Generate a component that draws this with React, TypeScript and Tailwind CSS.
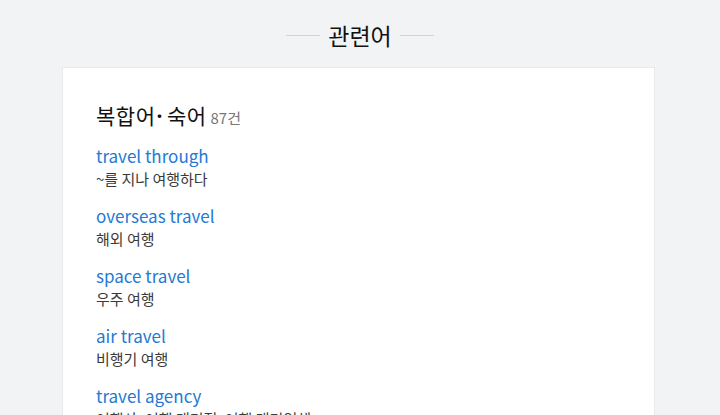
const items = [
  { en: "travel through", ko: "~를 지나 여행하다" },
  { en: "overseas travel", ko: "해외 여행" },
  { en: "space travel", ko: "우주 여행" },
  { en: "air travel", ko: "비행기 여행" },
  { en: "travel agency", ko: "여행사, 여행 대리점, 여행 대리업체" },
];

export default function App() {
  return (
    <div
      className="h-[415px] overflow-hidden bg-[#f2f3f5]"
      style={{ fontFamily: '"Noto Sans CJK KR", "Noto Sans", sans-serif' }}
    >
      <div className="flex items-center justify-center gap-[8px] pt-[20px]">
        <span className="h-px w-[34px] bg-[#cfd2d6]" />
        <h2 className="text-[23px] leading-[30px] text-[#111]">관련어</h2>
        <span className="h-px w-[34px] bg-[#cfd2d6]" />
      </div>

      <div className="ml-[62px] mt-[17px] w-[593px] border border-[#e9eaec] bg-white px-[33px] pt-[33px]">
        <div className="flex items-baseline gap-[4px]">
          <h3 className="text-[21px] leading-[28px] tracking-[0.5px] text-[#111]">
            복합어
            <span className="ml-[1px] mr-[4px] font-['Noto_Sans'] font-bold">·</span>
            숙어
          </h3>
          <span className="text-[15px] text-[#777]">87건</span>
        </div>

        <ul className="mt-[14px] flex flex-col gap-[14px]">
          {items.map((it) => (
            <li key={it.en}>
              <a className="block text-[17px] leading-[24px] text-[#2479d4]">{it.en}</a>
              <p className="text-[15px] leading-[22px] text-[#3a3a3a]">{it.ko}</p>
            </li>
          ))}
        </ul>
      </div>
    </div>
  );
}
